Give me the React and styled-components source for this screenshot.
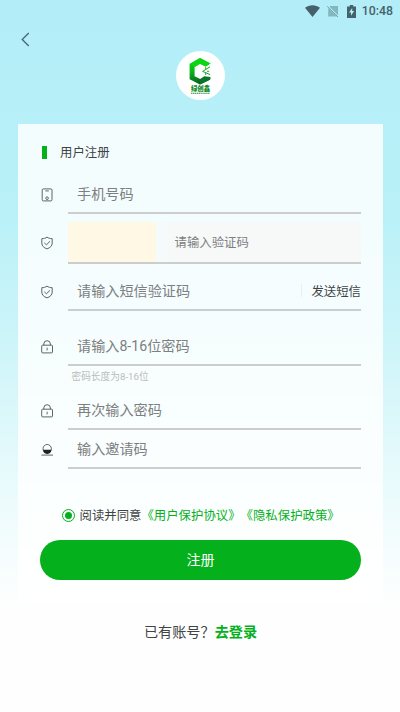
import React from "react";
import styled, { createGlobalStyle } from "styled-components";

const COLORS = {
  primary: "#04b11c",
  text: "#3f4444",
  placeholder: "#7c8081",
  hint: "#b9bdbd",
  line: "#cbcdce",
  status: "#45626a",
};

const GlobalStyle = createGlobalStyle`
  * {
    box-sizing: border-box;
  }

  body {
    margin: 0;
    background: #fefefe;
    font-family: Roboto, "Noto Sans CJK SC", sans-serif;
    text-spacing-trim: space-all;
    color: ${COLORS.text};
  }
`;

const PhoneIcon = () => (
  <Glyph viewBox="0 0 14 14">
    <rect x="2.2" y="0.9" width="9.8" height="12" rx="1.2" />
    <path d="M5.4 2.9h3.4" />
    <circle cx="7.1" cy="10.2" r="1.3" />
  </Glyph>
);

const ShieldIcon = () => (
  <Glyph viewBox="0 0 14 14">
    <path d="M7 1.1C5.7 2.2 3.8 2.6 1.8 2.7v4.4c0 2.8 2.1 4.7 5.2 5.8 3.1-1.1 5.2-3 5.2-5.8V2.7C10.2 2.6 8.3 2.2 7 1.1z" />
    <path d="M4.3 6.8l2.1 2 3.6-3.5" />
  </Glyph>
);

const LockIcon = () => (
  <Glyph viewBox="0 0 14 14">
    <rect x="1.7" y="5.2" width="10.8" height="7.7" rx="0.9" />
    <path d="M3.8 5.2V4a3.3 3.3 0 0 1 6.6 0v1.2M7.1 7.7v2.7" />
  </Glyph>
);

const InviteIcon = () => (
  <Glyph viewBox="0 0 14 14">
    <circle cx="7.2" cy="5.7" r="4.2" />
    <path d="M3.1 6.8h8.2a4.1 4.1 0 0 1-8.2 0z" fill="#222" stroke="none" />
    <path d="M1.4 12.1h11.6" />
  </Glyph>
);

const Logo = () => (
  <svg width="49" height="49" viewBox="0 0 49 49">
    <defs>
      <linearGradient id="mark" x1="0" y1="0" x2="0.3" y2="1">
        <stop offset="0" stopColor="#08dc0c" />
        <stop offset="0.5" stopColor="#0bb51b" />
        <stop offset="1" stopColor="#075f22" />
      </linearGradient>
    </defs>
    <path
      d="M24 7l10.5 5.6-4.8 3-5.7-2.8-5.4 3.1v9.4l5.6 2.7 4.2-1.8 5.9.7-.3 1.9L24 33.6l-10.4-5.4V13z"
      fill="url(#mark)"
    />
    <path d="M13.6 13L24 7l10.5 5.6-4.8 3-5.7-2.8-5.4 3.1z" fill="#0bd811" />
    <path d="M24 28.2l4.2-3 6.3.9-.3 2.3L24 33.6z" fill="#08752a" />
    <path
      d="M34 15.8l-7.4 4.6 7.6 3.2M29.6 16.2l.2 2.3M29.7 24v-2.2M31 20.3h2.2"
      fill="none"
      stroke="#19a72a"
      strokeWidth="1"
    />
    <LogoName x="24.5" y="40.4" textAnchor="middle">
      绿创鑫
    </LogoName>
    <path d="M15 42.2h18.5" stroke="#218c35" strokeWidth="1.1" strokeDasharray="1.4 .5" />
  </svg>
);

const App = () => {
  return (
    <Page>
      <GlobalStyle />
      <StatusBar>
        <svg width="15" height="12" viewBox="0 0 15 12">
          <path d="M7.5 12L0 2.7C4.3-.7 10.7-.7 15 2.7z" fill="currentColor" />
        </svg>
        <svg width="12" height="12" viewBox="0 0 12 12">
          <path d="M3 1h8v10.5H1.2V4z" fill="#83b7c0" />
          <path d="M.4 1L11.6 12" stroke="#b3eef8" strokeWidth="1.8" />
          <path d="M.2 1.4L11 12" stroke="#5d8992" strokeWidth="0.8" />
        </svg>
        <svg width="9" height="13" viewBox="0 0 9 13">
          <path d="M0 1.5h2.8V0h3.4v1.5H9V13H0z" fill="currentColor" />
          <path d="M5.2 3L2 7.6h2v3.2l3.1-4.7H5.2z" fill="#b3eef8" />
        </svg>
        <Clock>10:48</Clock>
      </StatusBar>
      <NavBar>
        <svg width="10" height="15" viewBox="0 0 10 15">
          <path d="M8.8 1L2.2 7.5l6.6 6.4" fill="none" stroke="#4f647c" strokeWidth="1.35" />
        </svg>
      </NavBar>
      <Avatar>
        <Logo />
      </Avatar>

      <Card>
        <Title>用户注册</Title>

        <Row $height={38} $gap={8}>
          <PhoneIcon />
          <Field>手机号码</Field>
        </Row>
        <Row $height={42} $gap={8}>
          <ShieldIcon />
          <Field $flush>
            <Captcha />
            <CaptchaInput>请输入验证码</CaptchaInput>
          </Field>
        </Row>
        <Row $height={39} $gap={17}>
          <ShieldIcon />
          <Field>
            请输入短信验证码
            <SendButton>发送短信</SendButton>
          </Field>
        </Row>
        <Row $height={38} $gap={0}>
          <LockIcon />
          <Field>请输入8-16位密码</Field>
        </Row>
        <Hint>密码长度为8-16位</Hint>
        <Row $height={38} $gap={1}>
          <LockIcon />
          <Field>再次输入密码</Field>
        </Row>
        <Row $height={38} $gap={0}>
          <InviteIcon />
          <Field>输入邀请码</Field>
        </Row>

        <Agreement>
          <Radio />
          <span>
            阅读并同意<Green>《用户保护协议》《隐私保护政策》</Green>
          </span>
        </Agreement>
        <Submit>注册</Submit>
      </Card>

      <Footer>
        已有账号？<LoginLink>去登录</LoginLink>
      </Footer>
    </Page>
  );
};

const Page = styled.div`
  height: 712px;
  overflow: hidden;
  display: flex;
  flex-direction: column;
  background: linear-gradient(
    #b2edf8 0,
    #b6eff8 90px,
    #baf1f8 220px,
    #cbf4f9 330px,
    #e2f9fb 450px,
    #f5fdfe 550px,
    #fefefe 612px
  );
`;

const StatusBar = styled.div`
  height: 24px;
  padding: 0 7px 2px 0;
  display: flex;
  align-items: center;
  justify-content: flex-end;
  color: ${COLORS.status};

  svg + svg {
    margin-left: 7px;
  }

  svg:nth-of-type(3) {
    margin-left: 8px;
  }
`;

const Clock = styled.span`
  margin-left: 6px;
  font-size: 12.3px;
  font-weight: 500;
`;

const NavBar = styled.div`
  height: 27px;
  padding: 8px 0 0 20px;
  display: flex;
  align-items: flex-start;
`;

const Avatar = styled.div`
  width: 49px;
  height: 49px;
  margin-left: 176px;
  border-radius: 50%;
  background: #fff;
`;

const LogoName = styled.text`
  font-family: "Noto Sans CJK SC", sans-serif;
  font-size: 6.4px;
  font-weight: 900;
  fill: #148a2b;
`;

const Card = styled.div`
  width: 365px;
  height: 479px;
  margin: 24px 0 0 18px;
  padding: 18px 22px 0;
  background: rgba(255, 255, 255, 0.83);
`;

const Title = styled.div`
  height: 20px;
  margin-bottom: 14px;
  padding-left: 2px;
  display: flex;
  align-items: center;
  font-size: 12.4px;

  &::before {
    content: "";
    width: 5px;
    height: 13px;
    margin: 1px 13px 0 0;
    background: ${COLORS.primary};
  }
`;

const Row = styled.div`
  height: ${(props) => props.$height}px;
  margin-bottom: ${(props) => props.$gap}px;
  display: flex;
  align-items: center;
`;

const Glyph = styled.svg`
  width: 14px;
  height: 14px;
  margin-right: 14px;
  flex-shrink: 0;
  fill: none;
  stroke: #4d5354;
  stroke-width: 0.9;
`;

const Field = styled.div`
  flex: 1;
  height: 100%;
  padding: ${(props) => (props.$flush ? 0 : "0 0 2px 9px")};
  display: flex;
  align-items: center;
  border-bottom: 2px solid ${COLORS.line};
  font-size: 14.15px;
  color: ${COLORS.placeholder};
`;

const Captcha = styled.div`
  width: 88px;
  height: 100%;
  background: #fff8e4;
`;

const CaptchaInput = styled.div`
  flex: 1;
  height: 100%;
  padding: 0 0 1px 18.5px;
  display: flex;
  align-items: center;
  background: linear-gradient(90deg, #f5fcfc, #f7f8f8 20px);
  font-size: 12.4px;
`;

const SendButton = styled.div`
  height: 13px;
  margin: 2px 0 0 auto;
  padding-left: 9px;
  display: flex;
  align-items: center;
  border-left: 1px solid #e9f0f1;
  font-size: 12.4px;
  color: ${COLORS.text};
`;

const Hint = styled.div`
  height: 26px;
  padding: 3px 0 0 31.5px;
  font-size: 9.7px;
  line-height: 15px;
  color: ${COLORS.hint};
`;

const Agreement = styled.div`
  height: 20px;
  margin: 36px 0 15px 21.5px;
  display: flex;
  align-items: center;
  font-size: 12.4px;
  white-space: nowrap;
`;

const Radio = styled.span`
  width: 13px;
  height: 13px;
  margin-right: 5px;
  padding: 2px;
  border: 1px solid ${COLORS.primary};
  border-radius: 50%;
  background: ${COLORS.primary} content-box;
`;

const Green = styled.span`
  color: ${COLORS.primary};
`;

const Submit = styled.div`
  height: 40px;
  padding-bottom: 2px;
  display: flex;
  align-items: center;
  justify-content: center;
  border-radius: 20px;
  background: ${COLORS.primary};
  font-size: 14.1px;
  color: #fff;
`;

const Footer = styled.div`
  height: 22px;
  margin-top: 17px;
  padding-left: 1px;
  display: flex;
  align-items: center;
  justify-content: center;
  font-size: 14.15px;
`;

const LoginLink = styled.span`
  font-weight: 700;
  color: ${COLORS.primary};
`;

export default App;
